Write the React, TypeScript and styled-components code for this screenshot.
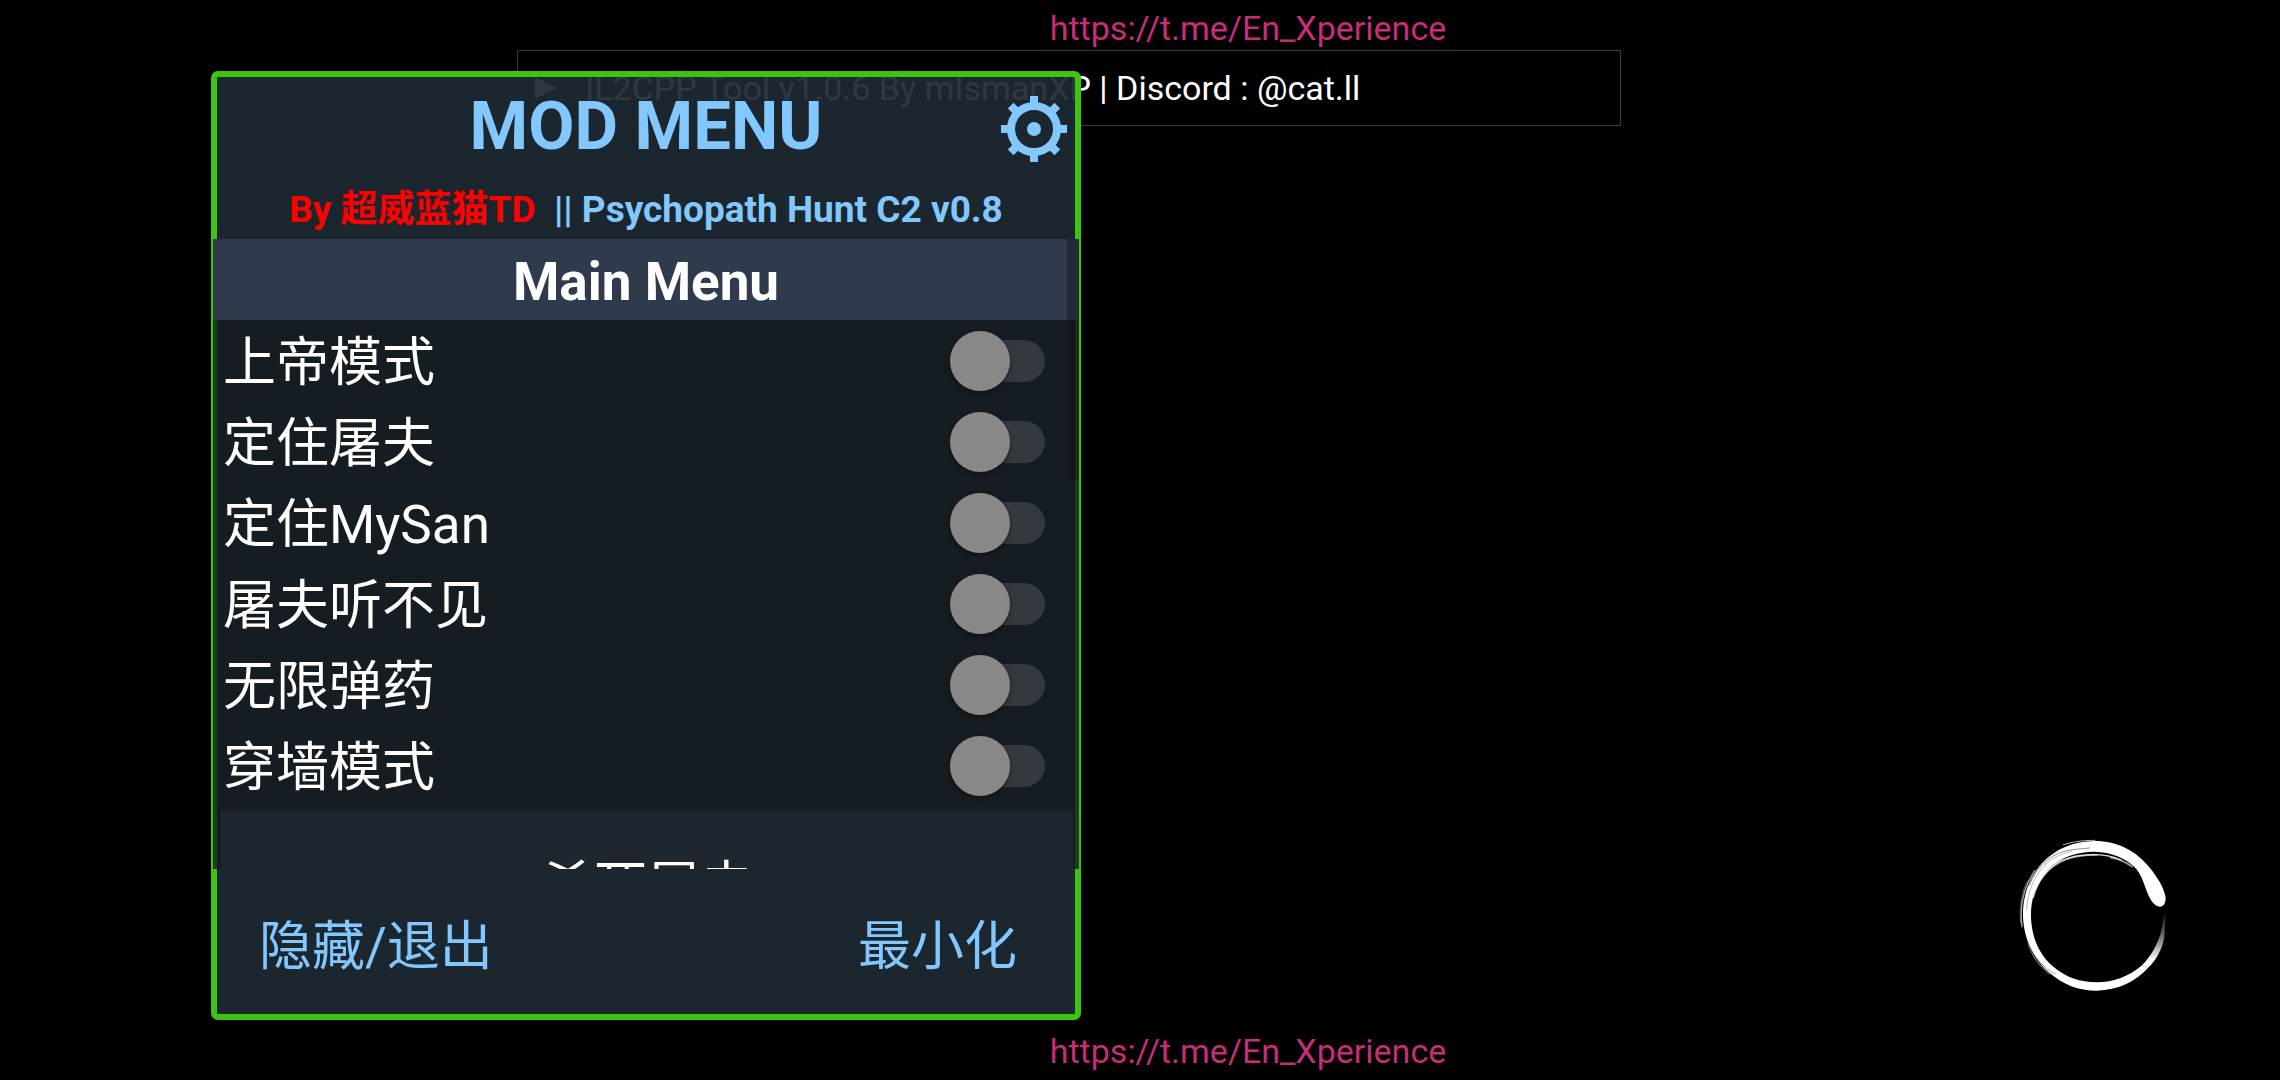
import React, { useState } from "react";
import styled, { createGlobalStyle } from "styled-components";

const GlobalStyle = createGlobalStyle`
  *, *::before, *::after { box-sizing: border-box; }
  html, body, #root { height: 100%; }
  body {
    margin: 0;
    background: #000;
    color: #fff;
    overflow: hidden;
    font-family: Roboto, "Noto Sans CJK SC", sans-serif;
  }
`;

const Screen = styled.main`
  position: relative;
  height: 100%;
  display: flex;
  flex-direction: column;
  justify-content: space-between;
`;

const TopArea = styled.div`
  display: flex;
  flex-direction: column;
`;

const Watermark = styled.a`
  display: block;
  padding: 8px 0 2px 216px;
  text-align: center;
  font-size: 34px;
  line-height: 40px;
  color: #c62d7a;
  text-decoration: none;
`;

const BottomArea = styled.div`
  padding-bottom: 7px;
`;

const ToolBar = styled.header`
  display: flex;
  align-items: center;
  gap: 27px;
  width: 1104px;
  height: 76px;
  margin-left: 517px;
  padding-left: 16px;
  border: 1px solid #3a3a3e;
  font-size: 34px;
  white-space: nowrap;
`;

const PlayMark = styled.svg`
  width: 24px;
  height: 24px;
  fill: #fff;
`;

const Panel = styled.section`
  position: absolute;
  left: 211px;
  top: 71px;
  width: 870px;
  border: 6px solid #3cc410;
  border-radius: 7px;
  background: rgba(30, 41, 49, 0.93);
  background-clip: padding-box;
`;

const PanelHead = styled.div`
  display: grid;
  grid-template-columns: 80px 1fr 80px;
  grid-template-rows: 96px 1fr;
  height: 162px;
`;

const Title = styled.h1`
  margin: 0;
  padding-top: 9px;
  text-align: center;
  font-size: 67px;
  line-height: 80px;
  font-weight: 700;
  color: #82c8ff;
  grid-column: 2;
`;

const SettingsButton = styled.button`
  width: 80px;
  height: 80px;
  margin-top: 12px;
  padding: 0;
  border: 0;
  background: none;
  color: #82c8ff;
  svg { display: block; width: 80px; height: 80px; }
`;

const Subtitle = styled.p`
  grid-column: 1 / -1;
  margin: 0;
  padding-top: 13px;
  text-align: center;
  font-size: 37px;
  line-height: 48px;
  font-weight: 700;
  color: #82c8ff;
  white-space: pre;
`;

const Author = styled.span`
  color: #ff0000;
`;

const ScrollFrame = styled.div`
  position: relative;
  height: 630px;
  margin: 0 -4px;
  overflow: hidden;
  background: rgba(20, 27, 33, 0.8);
`;

const ScrollThumb = styled.div`
  position: absolute;
  top: 0;
  right: 0;
  width: 12px;
  height: 241px;
  background: rgba(20, 16, 20, 0.4);
`;

const Category = styled.h2`
  margin: 0;
  background: #2f3b4d;
  text-align: center;
  font-size: 53px;
  line-height: 80px;
  padding-top: 3px;
  height: 81px;
  font-weight: 700;
`;

const OptionRow = styled.label`
  display: flex;
  align-items: center;
  justify-content: space-between;
  height: 81px;
  padding: 0 34px 0 10px;
`;

const OptionName = styled.span`
  padding-top: 5px;
  font-size: 53px;
  line-height: 80px;
`;

const Toggle = styled.input`
  appearance: none;
  position: relative;
  width: 95px;
  height: 60px;
  margin: 0;
  &::before {
    content: "";
    position: absolute;
    inset: 9px 0 9px 9px;
    border-radius: 21px;
    background: #34383f;
  }
  &::after {
    content: "";
    position: absolute;
    left: 0;
    top: 0;
    width: 60px;
    height: 60px;
    border-radius: 50%;
    background: #888;
    box-shadow: 0 2px 5px rgba(0, 0, 0, 0.4);
  }
  &:checked::after { left: 35px; background: #82c8ff; }
`;

const ActionButton = styled.button`
  display: block;
  width: calc(100% - 14px);
  height: 132px;
  margin: 5px 5px 5px 8px;
  padding: 10px 0 0;
  border: 0;
  background: #1e272d;
  color: #fff;
  font-family: inherit;
  font-size: 53px;
`;

const PanelFoot = styled.footer`
  display: flex;
  justify-content: space-between;
  align-items: center;
  height: 145px;
  padding: 10px 58px 0 42px;
`;

const FootButton = styled.button`
  padding: 0;
  border: 0;
  background: none;
  color: #82c8ff;
  font-family: inherit;
  font-size: 53px;
  line-height: 80px;
`;

const BrushRing = styled.svg`
  position: absolute;
  right: 80px;
  bottom: 70px;
  width: 220px;
  height: 200px;
`;

const options = ["上帝模式", "定住屠夫", "定住MySan", "屠夫听不见", "无限弹药", "穿墙模式"];
const teeth = [0, 45, 90, 135, 180, 225, 270, 315];

const Gear = () => (
  <svg viewBox="0 0 80 80" aria-hidden="true">
    <circle cx="39" cy="40" r="23" fill="none" stroke="currentColor" strokeWidth="8" />
    <circle cx="39" cy="40" r="7" fill="currentColor" />
    {teeth.map((angle) => (
      <rect
        key={angle}
        x="35"
        y="7"
        width="8"
        height="8"
        fill="currentColor"
        transform={`rotate(${angle} 39 40)`}
      />
    ))}
  </svg>
);

const Ring = () => (
  <BrushRing viewBox="0 0 660 600" aria-hidden="true">
    <defs>
      <linearGradient id="tail" x1="0" y1="300" x2="0" y2="450" gradientUnits="userSpaceOnUse">
        <stop offset="0" stopColor="#fff" stopOpacity="0.05" />
        <stop offset="0.45" stopColor="#fff" stopOpacity="0.35" />
        <stop offset="1" stopColor="#fff" />
      </linearGradient>
    </defs>
    <path
      fill="#fff"
      d="M540 290C553 290 559 275 556 257C550 232 533 202 508 172C468 122 412 93 345 93C280 93 224 118 186 160C148 202 127 260 129 322C132 388 160 446 208 488C248 523 296 542 350 542C414 541 466 516 506 472L486 466C446 500 402 517 350 517C300 517 258 502 222 472C178 436 155 382 153 322C151 262 172 212 208 175C244 140 292 126 345 125C394 126 436 144 464 172C482 190 490 215 500 243C510 270 524 290 540 290Z"
    />
    <path fill="url(#tail)" d="M486 466C512 440 530 408 542 370L554 310L557 312L553 382C546 418 530 448 506 472Z" />
    <g fill="none" stroke="#fff" strokeLinecap="round">
      <path strokeWidth="4" opacity="0.85" d="M160 262C172 212 204 172 244 152C296 128 374 128 424 150" />
      <path strokeWidth="4" opacity="0.6" d="M168 236C186 194 218 166 256 150C280 140 310 135 350 135" />
      <path strokeWidth="5" opacity="0.6" d="M392 143C420 148 440 158 456 170" />
      <path strokeWidth="4" opacity="0.65" d="M126 350C118 290 130 232 164 182" />
      <path strokeWidth="2" opacity="0.5" d="M121 340C119 290 124 244 142 214" />
      <path strokeWidth="3" opacity="0.7" d="M250 104C280 94 312 91 345 91" />
      <path strokeWidth="3" opacity="0.5" d="M154 380C148 345 148 318 152 300" />
      <path strokeWidth="3" opacity="0.6" d="M144 400C156 438 178 468 208 492" />
    </g>
    <g fill="none" stroke="#000" strokeLinecap="round">
      <path strokeWidth="2" opacity="0.65" d="M148 226C168 174 204 138 252 124C278 117 304 117 328 114" />
      <path strokeWidth="2" opacity="0.4" d="M140 300C142 250 160 200 196 164C218 143 246 130 276 124" />
      <path strokeWidth="2" opacity="0.5" d="M142 394C158 436 184 470 226 492" />
    </g>
  </BrushRing>
);

export default function App() {
  const [enabled, setEnabled] = useState<Record<string, boolean>>({});

  return (
    <>
      <GlobalStyle />
      <Screen>
        <TopArea>
          <Watermark href="https://t.me/En_Xperience">https://t.me/En_Xperience</Watermark>
          <ToolBar>
            <PlayMark viewBox="0 0 24 24" aria-hidden="true">
              <path d="M1 1L23 12L1 23Z" />
            </PlayMark>
            <span>IL2CPP Tool v1.0.6 By mIsmanXP | Discord : @cat.ll</span>
          </ToolBar>
        </TopArea>
        <BottomArea>
          <Watermark href="https://t.me/En_Xperience">https://t.me/En_Xperience</Watermark>
        </BottomArea>
        <Ring />
        <Panel>
          <PanelHead>
            <Title>MOD MENU</Title>
            <SettingsButton type="button" aria-label="Settings">
              <Gear />
            </SettingsButton>
            <Subtitle>
              <Author>By 超威蓝猫TD</Author>
              {"  || Psychopath Hunt C2 v0.8"}
            </Subtitle>
          </PanelHead>
          <ScrollFrame>
            <Category>Main Menu</Category>
            {options.map((name) => (
              <OptionRow key={name}>
                <OptionName>{name}</OptionName>
                <Toggle
                  type="checkbox"
                  checked={!!enabled[name]}
                  onChange={(e) => setEnabled({ ...enabled, [name]: e.target.checked })}
                />
              </OptionRow>
            ))}
            <ActionButton type="button">杀死屠夫</ActionButton>
            <ScrollThumb />
          </ScrollFrame>
          <PanelFoot>
            <FootButton type="button">隐藏/退出</FootButton>
            <FootButton type="button">最小化</FootButton>
          </PanelFoot>
        </Panel>
      </Screen>
    </>
  );
}
